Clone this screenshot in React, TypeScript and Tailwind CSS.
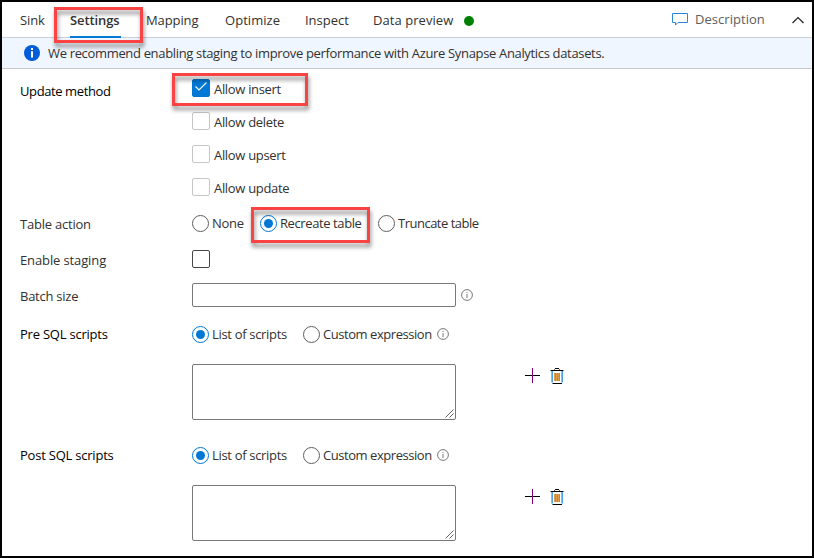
import type { ReactNode } from "react";

function Frame({ className }: { className: string }) {
  return (
    <div
      className={`pointer-events-none absolute z-10 border-3 border-[#fb4343] drop-shadow-[1px_4px_2px_rgba(0,0,0,0.45)] ${className}`}
    />
  );
}

function Radio({ checked = false }: { checked?: boolean }) {
  return (
    <span
      className={`flex size-[17px] shrink-0 items-center justify-center rounded-full border bg-white ${checked ? "border-[#0078d4]" : "border-[#605e5c]"}`}
    >
      {checked && <span className="size-[9px] rounded-full bg-[#0078d4]" />}
    </span>
  );
}

function Checkbox({ checked = false, dark = false }: { checked?: boolean; dark?: boolean }) {
  const tone = checked ? "border-[#0078d4] bg-[#0078d4]" : dark ? "border-[#484644]" : "border-[#c8c6c4]";
  return (
    <span className={`flex size-[18px] shrink-0 items-center justify-center rounded-[2px] border ${tone}`}>
      {checked && (
        <svg width="14" height="12" viewBox="0 0 14 12" fill="none" stroke="#fff" strokeWidth="1.1">
          <path d="M1.500 4.500 5 8l7.500-7.500" />
        </svg>
      )}
    </span>
  );
}

function InfoIcon() {
  return (
    <svg width="12" height="12" viewBox="0 0 12 12" fill="none" stroke="#6b6967" className="shrink-0">
      <circle cx="6" cy="6" r="5.400" strokeWidth="0.9" />
      <path d="M6 5v4M6 3v1" strokeWidth="0.9" />
    </svg>
  );
}

function Label({ children, className = "" }: { children: ReactNode; className?: string }) {
  return <div className={`w-[190px] shrink-0 whitespace-nowrap pl-[18px] leading-[18px] ${className}`}>{children}</div>;
}

function ScriptSection({ title }: { title: string }) {
  return (
    <section className="h-[121px]">
      <div className="flex h-[17px] items-center">
        <Label className="pb-0.5 font-medium text-black tracking-[-0.22px]">{title}</Label>
        <div className="flex items-center">
          <div className="flex w-[111px] items-center gap-[3px]">
            <Radio checked />
            <span className="whitespace-nowrap pb-0.5 tracking-[-0.32px]">List of scripts</span>
          </div>
          <div className="flex w-[133.5px] items-center gap-[3px]">
            <Radio />
            <span className="whitespace-nowrap pb-0.5 tracking-[-0.45px]">Custom expression</span>
          </div>
          <span className="-mt-0.5">
            <InfoIcon />
          </span>
        </div>
      </div>
      <div className="mt-[21px] flex pl-[190px]">
        <div className="flex h-14 w-[264px] items-end justify-end rounded-[2px] border border-[#7a7876] p-px">
          <svg width="9" height="9" viewBox="0 0 9 9" stroke="#555" strokeWidth="0.9">
            <path d="M0.500 8.500l8-8M4.500 8.500l4-4" />
          </svg>
        </div>
        <svg width="15" height="15" viewBox="0 0 15 15" className="ml-[69px] mt-[4px]">
          <path d="M0 7.500h15" stroke="#000" />
          <path d="M7.500 0v15" stroke="#800080" />
        </svg>
        <svg width="14" height="16" viewBox="0 0 14 16" fill="none" className="ml-[10px] mt-[4px]">
          <path d="M1.500 3v11.500M11.500 3v11.500" stroke="#e0a868" />
          <path d="M2.500 3v11.500M12.500 3v11.500" stroke="#4ba3e8" />
          <path d="M4.500 2.500V1M9.500 2.500V1" stroke="#6f5a45" />
          <path d="M0.500 2.500h13M2.500 15.500h9.500M5 0.500h4" stroke="#000" />
          <path d="M4.500 5v8M6.500 5v8M8.500 5v8" stroke="#e0a050" />
          <path d="M5.500 5v8M7.500 5v8M9.500 5v8" stroke="#a58a6c" />
        </svg>
      </div>
    </section>
  );
}

const methods = [
  { name: "Allow insert", checked: true },
  { name: "Allow delete", checked: false },
  { name: "Allow upsert", checked: false },
  { name: "Allow update", checked: false },
];

export default function App() {
  return (
    <div className="relative h-[558px] w-[814px] overflow-hidden border-2 border-black bg-white font-['Open_Sans','Noto_Sans',sans-serif] text-[13px] leading-[18px] text-[#323130]">
      <nav className="flex h-9 items-start whitespace-nowrap border-b border-[#c9d0db] pl-[18px] pt-[9px]">
        <span className="w-[50px] tracking-[-0.1px]">Sink</span>
        <span className="h-[27px] w-[51px] border-b-2 border-[#0078d4] font-semibold tracking-[-0.1px]">Settings</span>
        <span className="ml-[25px] w-[79px] tracking-[-0.1px]">Mapping</span>
        <span className="w-[80px] tracking-[0.05px]">Optimize</span>
        <span className="w-[68px] tracking-[-0.02px]">Inspect</span>
        <span className="w-[91px] tracking-[0.06px]">Data preview</span>
        <span className="mt-[5px] size-[10px] rounded-full bg-[#008000]" />
        <svg width="16" height="14" viewBox="0 0 16 14" fill="none" stroke="#2b88d8" className="ml-[198px] mt-[1px]">
          <path d="M0.500 1.500h15v9H6L3.500 13v-2.500h-3z" />
        </svg>
        <span className="-mt-px ml-[7px] w-[70px] text-[#605e5c] tracking-[0.04px]">Description</span>
        <svg width="12" height="8" viewBox="0 0 12 8" fill="none" stroke="#222" strokeWidth="1.200" className="ml-[27px] mt-[5px]">
          <path d="M0.500 7 6 1.500 11.500 7" />
        </svg>
      </nav>
      <div className="flex h-[31px] items-center border-b border-[#c8c8c8] bg-[#f0f6ff] pl-[22px]">
        <svg width="16" height="16" viewBox="0 0 16 16" className="-mt-px">
          <circle cx="8" cy="8" r="8" fill="#015cda" />
          <path d="M8 6.300v6.200M8 3v2" stroke="#fff" strokeWidth="2" />
        </svg>
        <span className="ml-[8px] whitespace-nowrap tracking-[-0.335px]">
          We recommend enabling staging to improve performance with Azure Synapse Analytics datasets.
        </span>
      </div>
      <main>
        <div className="flex h-[146px] pt-[10px]">
          <Label className="pt-[3px] text-black tracking-[-0.4px]">Update method</Label>
          <div className="flex flex-col gap-[15px]">
            {methods.map((m) => (
              <div key={m.name} className="flex h-[18px] gap-[4px]">
                <Checkbox checked={m.checked} />
                <span className="whitespace-nowrap pt-px tracking-[-0.32px]">{m.name}</span>
              </div>
            ))}
          </div>
        </div>
        <div className="flex h-[35px] items-start">
          <Label className="tracking-[-0.22px]">Table action</Label>
          <div className="flex h-[17px] items-center whitespace-nowrap tracking-[-0.4px]">
            <div className="flex w-[68px] items-center gap-[3px]">
              <Radio />
              <span className="pb-0.5 tracking-[-0.25px]">None</span>
            </div>
            <div className="flex w-[118px] items-center gap-[3px]">
              <Radio checked />
              <span className="pb-0.5">Recreate table</span>
            </div>
            <div className="flex items-center gap-[3px]">
              <Radio />
              <span className="pb-0.5 tracking-[-0.5px]">Truncate table</span>
            </div>
          </div>
        </div>
        <div className="flex h-[33px] items-start">
          <Label className="pt-px tracking-[-0.12px]">Enable staging</Label>
          <Checkbox dark />
        </div>
        <div className="flex h-[43px] items-start">
          <Label className="pt-[4px] tracking-[-0.25px]">Batch size</Label>
          <div className="h-6 w-[264px] rounded-[2px] border border-[#7a7876]" />
          <span className="ml-[5px] mt-[6px]">
            <InfoIcon />
          </span>
        </div>
        <ScriptSection title="Pre SQL scripts" />
        <ScriptSection title="Post SQL scripts" />
      </main>
      <Frame className="left-[52px] top-[5px] h-9 w-[89px]" />
      <Frame className="left-[170px] top-[71px] h-[33px] w-[136px]" />
      <Frame className="left-[249px] top-[205px] h-9 w-[119px]" />
    </div>
  );
}
